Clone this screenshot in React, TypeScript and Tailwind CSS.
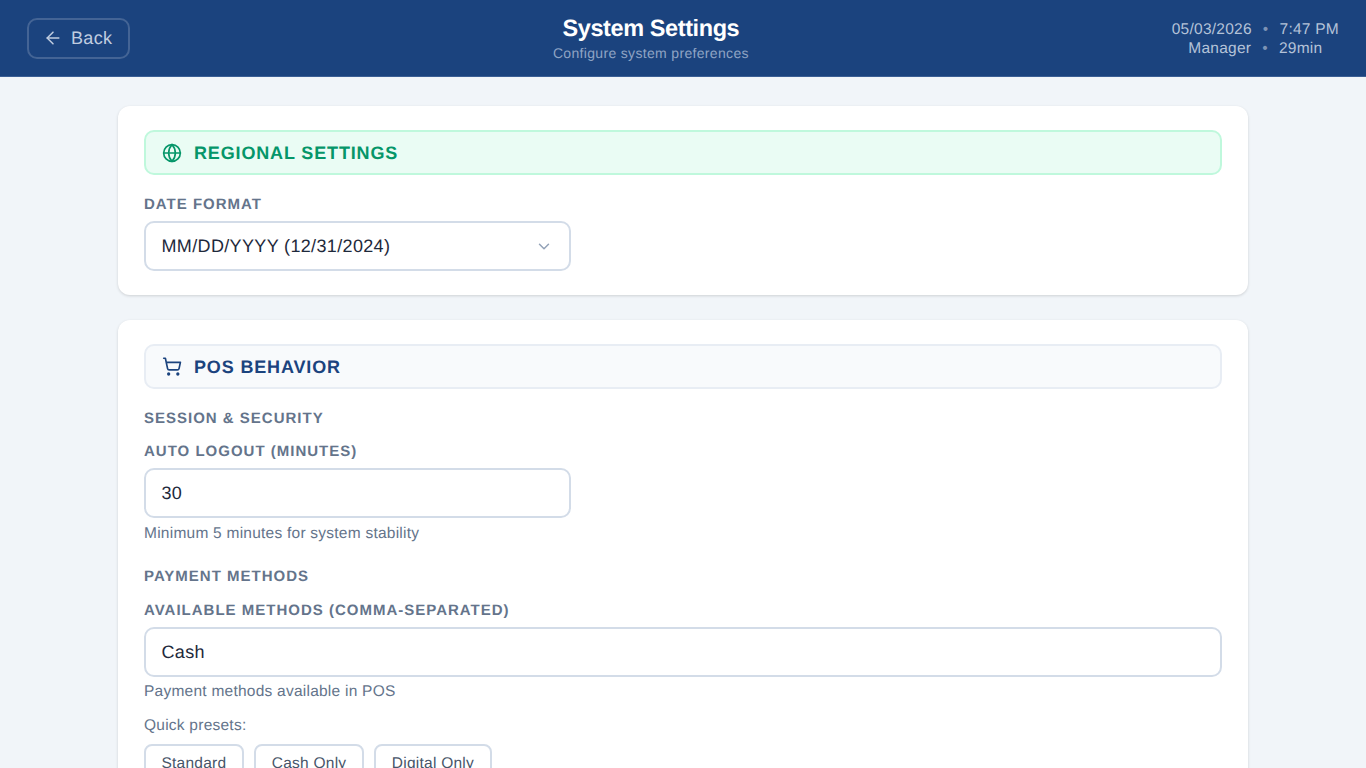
import { ArrowLeft, ChevronDown, Globe, ShoppingCart } from "lucide-react";

function Label({ children, className = "" }: { children: React.ReactNode; className?: string }) {
  return <div className={`text-[15px] leading-[19px] font-bold tracking-[1px] text-[#64748b] ${className}`}>{children}</div>;
}

function Field({ value, wide, chevron }: { value: string; wide?: boolean; chevron?: boolean }) {
  return (
    <div className={`flex h-[50px] items-center justify-between rounded-[10px] border-2 border-[#d3dce8] bg-white pl-[15.5px] pr-[16px] text-[18px] tracking-[0.35px] text-[#1e293b] ${wide ? "w-full" : "w-[427px]"}`}>
      <span>{value}</span>
      {chevron && <ChevronDown className="h-[18px] w-[18px] translate-y-[0.5px] text-[#94a3b8]" strokeWidth={2} />}
    </div>
  );
}

function Preset({ children }: { children: React.ReactNode }) {
  return <div className="rounded-lg border-2 border-[#d3dce8] bg-white px-[15.5px] pt-[9px] pb-[7px] text-[15.5px] leading-[18px] tracking-[0.24px] text-[#475569]">{children}</div>;
}

export default function App() {
  return (
    <div className="h-[768px] overflow-hidden bg-[#f1f5f9] font-['Liberation_Sans',sans-serif] [text-rendering:geometricPrecision]">
      <header className="flex h-[77px] items-center justify-between border-b border-b-[#3b5f95] bg-[#1b437e] pl-[27px] pr-[27px]">
        <div className="flex h-[41px] w-[103px] items-center justify-start gap-2 rounded-[10px] border-2 border-[#ffffff2e] pl-[14px] text-[18px] tracking-[0.35px] text-[#c0cde0]">
          <ArrowLeft className="h-5 w-5" strokeWidth={1.8} />
          <span>Back</span>
        </div>
        <div className="mb-[2px] flex flex-col items-center">
          <div className="text-[23.5px] leading-[32px] font-bold tracking-[-0.4px] text-white">System Settings</div>
          <div className="text-[14px] leading-[18px] tracking-[0.33px] text-[#8fa4c4]">Configure system preferences</div>
        </div>
        <div className="flex flex-col items-center pt-[2px] text-[15.5px] leading-[19px] tracking-[0.25px] text-[#b4c2d8]">
          <div className="flex">
            <span>05/03/2026</span>
            <span className="mx-[11px] text-[#7d93b5]">•</span>
            <span>7:47 PM</span>
          </div>
          <div className="flex">
            <span>Manager</span>
            <span className="mx-[11px] text-[#7d93b5]">•</span>
            <span>29min</span>
          </div>
        </div>
      </header>
      <main className="mx-auto flex w-[1130px] flex-col gap-[25px] pt-[29px]">
        <section className="rounded-xl bg-white px-[26px] py-6 shadow-[0_1px_3px_rgba(0,0,0,0.15)]">
          <div className="flex h-[45px] items-center gap-3 rounded-[10px] border-2 border-[#bff8dc] bg-[#eafcf4] pl-4 text-[18px] leading-[28px] font-bold tracking-[0.85px] text-[#059669]">
            <Globe className="h-5 w-5" strokeWidth={2} />
            <span className="pt-[1px]">REGIONAL SETTINGS</span>
          </div>
          <Label className="mt-5 mb-[7px]">DATE FORMAT</Label>
          <Field value="MM/DD/YYYY (12/31/2024)" chevron />
        </section>
        <section className="rounded-xl bg-white px-[26px] pt-6 pb-6 shadow-[0_1px_3px_rgba(0,0,0,0.15)]">
          <div className="flex h-[45px] items-center gap-3 rounded-[10px] border-2 border-[#e8edf4] bg-[#f8fafc] pl-4 text-[18px] leading-[28px] font-bold tracking-[0.85px] text-[#1b437e]">
            <ShoppingCart className="h-5 w-5 -translate-y-[0.5px]" strokeWidth={2} />
            <span className="pt-[1px]">POS BEHAVIOR</span>
          </div>
          <Label className="mt-5">SESSION &amp; SECURITY</Label>
          <Label className="mt-[14px] mb-[7px]">AUTO LOGOUT (MINUTES)</Label>
          <Field value="30" />
          <div className="mt-[6px] text-[15.5px] leading-[20px] tracking-[0.24px] text-[#64748b]">Minimum 5 minutes for system stability</div>
          <Label className="mt-[23px]">PAYMENT METHODS</Label>
          <Label className="mt-[15px] mb-[7px]">AVAILABLE METHODS (COMMA-SEPARATED)</Label>
          <Field value="Cash" wide />
          <div className="mt-[5px] text-[15.5px] leading-[20px] tracking-[0.24px] text-[#64748b]">Payment methods available in POS</div>
          <div className="mt-[14px] text-[15.5px] leading-[20px] tracking-[0.24px] text-[#64748b]">Quick presets:</div>
          <div className="mt-[8px] flex gap-[10.5px]">
            <Preset>Standard</Preset>
            <Preset>Cash Only</Preset>
            <Preset>Digital Only</Preset>
          </div>
        </section>
      </main>
    </div>
  );
}
